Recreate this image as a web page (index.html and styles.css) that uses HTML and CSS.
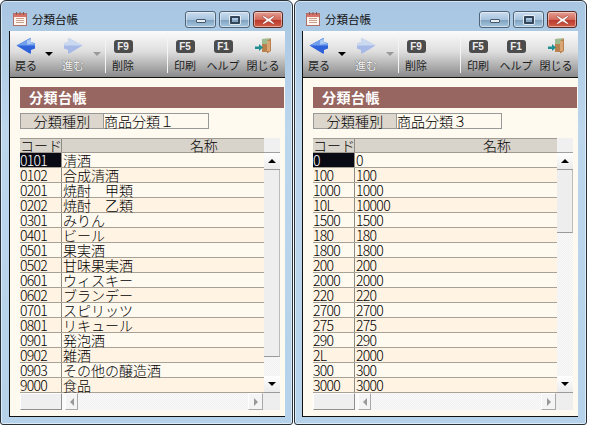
FILE: index.html
```html
<!DOCTYPE html>
<html lang="ja">
<head>
<meta charset="utf-8">
<title>分類台帳</title>
<link rel="stylesheet" href="styles.css">
</head>
<body>
<div class="desk">
  <section class="win win-a">
    <div class="cap">
      <svg class="app" viewBox="0 0 16 16"><rect x="1.5" y="2.5" width="13" height="12" fill="#fff6ee" stroke="#b0706a"/><rect x="2" y="3" width="12" height="3" fill="#d9736a"/><path d="M4 7.500h8M4 9.500h8M4 11.500h8" stroke="#c9a090"/><path d="M4.500 1v3M8 1v3M11.500 1v3" stroke="#8a5a50"/></svg>
      <span class="cap-t">分類台帳</span>
      <div class="ctl"><span class="btn"><i class="g-min"></i></span><span class="btn"><i class="g-max"></i></span><span class="btn close"><svg viewBox="0 0 12 9" class="g-x"><path d="M1.500 .5 6 3.200 10.500 .5 11.500 1.500 8 4.500 11.500 7.500 10.500 8.500 6 5.800 1.500 8.500 .5 7.500 4 4.500 .5 1.500Z" fill="#fff" stroke="#8a3a30" stroke-width=".5"/></svg></span></div>
    </div>
    <div class="client">
      <div class="tb">
        <div class="tool t-nav"><svg class="ic" viewBox="0 0 20 16"><path d="M.5 7.500 13.500.5h1.500v3.500l4 1.500v5l-4 1.500v3.500h-1.500Z" fill="#2f62d8"/><path d="M.5 7.500 13.500.5h1.500v3.500l4 1.500v2Z" fill="#6f9fec"/><path d="M11 2.500 15 1v3l3 1.500-7 1Z" fill="#a9c8f4"/></svg><span>戻る</span></div>
        <i class="drop"></i>
        <div class="tool t-nav off"><svg class="ic" viewBox="0 0 20 16"><path d="M19.500 7.500 6.500.5H5v3.500l-4 1.500v5l4 1.500v3.500h1.500Z" fill="#a7b9e6"/><path d="M19.500 7.500 6.500.5H5v3.500l-4 1.500v2Z" fill="#cbd9f0"/></svg><span>進む</span></div>
        <i class="drop off"></i>
        <b class="sep"></b>
        <div class="tool t-f"><kbd>F9</kbd><span>削除</span></div>
        <b class="sep s2"></b>
        <div class="tool t-p"><kbd>F5</kbd><span>印刷</span></div>
        <div class="tool t-h"><kbd>F1</kbd><span>ヘルプ</span></div>
        <div class="tool t-c"><svg class="ic door" viewBox="0 0 18 16"><path d="M8 1l9-.5V13l-4 2.500V14H8Z" fill="#b9814e"/><path d="M8 1l9-.5-4 2.500v3H8Z" fill="#9dbb8f"/><path d="M13 3h3v10h-3Z" fill="#d9a673"/><path d="M1 8.500h4V6l4 3.500L5 13v-2H1Z" fill="#1f8f92"/></svg><span>閉じる</span></div>
      </div>
      <div class="body">
        <h1 class="band">分類台帳</h1>
        <div class="kind"><span class="k-l">分類種別</span><span class="k-v">商品分類１</span></div>
        <div class="grid">
          <div class="hd"><span class="c1">コード</span><span class="c2">名称</span></div>
          <div class="r sel"><span class="c1">0101</span><span class="c2">清酒</span></div>
          <div class="r"><span class="c1">0102</span><span class="c2">合成清酒</span></div>
          <div class="r"><span class="c1">0201</span><span class="c2">焼酎　甲類</span></div>
          <div class="r"><span class="c1">0202</span><span class="c2">焼酎　乙類</span></div>
          <div class="r"><span class="c1">0301</span><span class="c2">みりん</span></div>
          <div class="r"><span class="c1">0401</span><span class="c2">ビール</span></div>
          <div class="r"><span class="c1">0501</span><span class="c2">果実酒</span></div>
          <div class="r"><span class="c1">0502</span><span class="c2">甘味果実酒</span></div>
          <div class="r"><span class="c1">0601</span><span class="c2">ウィスキー</span></div>
          <div class="r"><span class="c1">0602</span><span class="c2">ブランデー</span></div>
          <div class="r"><span class="c1">0701</span><span class="c2">スピリッツ</span></div>
          <div class="r"><span class="c1">0801</span><span class="c2">リキュール</span></div>
          <div class="r"><span class="c1">0901</span><span class="c2">発泡酒</span></div>
          <div class="r"><span class="c1">0902</span><span class="c2">雑酒</span></div>
          <div class="r"><span class="c1">0903</span><span class="c2">その他の醸造酒</span></div>
          <div class="r"><span class="c1">9000</span><span class="c2">食品</span></div>
          <div class="vs"><i class="corner"></i><i class="arr"><em class="up"></em></i><i class="thumb th-a"></i><i class="fill"></i><i class="arr"><em class="dn"></em></i></div>
          <div class="hs"><i class="hthumb"></i><i class="hgap"></i><i class="harr"><em class="lf"></em></i><i class="htrack"></i><i class="harr rb"><em class="rt"></em></i><i class="hend"></i></div>
        </div>
      </div>
    </div>
  </section>
  <section class="win win-b">
    <div class="cap">
      <svg class="app" viewBox="0 0 16 16"><rect x="1.500" y="2.500" width="13" height="12" fill="#fff6ee" stroke="#b0706a"/><rect x="2" y="3" width="12" height="3" fill="#d9736a"/><path d="M4 7.500h8M4 9.500h8M4 11.500h8" stroke="#c9a090"/><path d="M4.500 1v3M8 1v3M11.500 1v3" stroke="#8a5a50"/></svg>
      <span class="cap-t">分類台帳</span>
      <div class="ctl"><span class="btn"><i class="g-min"></i></span><span class="btn"><i class="g-max"></i></span><span class="btn close"><svg viewBox="0 0 12 9" class="g-x"><path d="M1.500 .5 6 3.200 10.500 .5 11.500 1.500 8 4.500 11.500 7.500 10.500 8.500 6 5.800 1.500 8.500 .5 7.500 4 4.500 .5 1.500Z" fill="#fff" stroke="#8a3a30" stroke-width=".5"/></svg></span></div>
    </div>
    <div class="client">
      <div class="tb">
        <div class="tool t-nav"><svg class="ic" viewBox="0 0 20 16"><path d="M.5 7.500 13.500.5h1.500v3.500l4 1.500v5l-4 1.500v3.500h-1.500Z" fill="#2f62d8"/><path d="M.5 7.500 13.500.5h1.500v3.500l4 1.500v2Z" fill="#6f9fec"/><path d="M11 2.500 15 1v3l3 1.500-7 1Z" fill="#a9c8f4"/></svg><span>戻る</span></div>
        <i class="drop"></i>
        <div class="tool t-nav off"><svg class="ic" viewBox="0 0 20 16"><path d="M19.500 7.500 6.500.5H5v3.500l-4 1.500v5l4 1.500v3.500h1.500Z" fill="#a7b9e6"/><path d="M19.500 7.500 6.500.5H5v3.500l-4 1.500v2Z" fill="#cbd9f0"/></svg><span>進む</span></div>
        <i class="drop off"></i>
        <b class="sep"></b>
        <div class="tool t-f"><kbd>F9</kbd><span>削除</span></div>
        <b class="sep s2"></b>
        <div class="tool t-p"><kbd>F5</kbd><span>印刷</span></div>
        <div class="tool t-h"><kbd>F1</kbd><span>ヘルプ</span></div>
        <div class="tool t-c"><svg class="ic door" viewBox="0 0 18 16"><path d="M8 1l9-.5V13l-4 2.500V14H8Z" fill="#b9814e"/><path d="M8 1l9-.5-4 2.500v3H8Z" fill="#9dbb8f"/><path d="M13 3h3v10h-3Z" fill="#d9a673"/><path d="M1 8.500h4V6l4 3.500L5 13v-2H1Z" fill="#1f8f92"/></svg><span>閉じる</span></div>
      </div>
      <div class="body">
        <h1 class="band">分類台帳</h1>
        <div class="kind"><span class="k-l">分類種別</span><span class="k-v">商品分類３</span></div>
        <div class="grid">
          <div class="hd"><span class="c1">コード</span><span class="c2">名称</span></div>
          <div class="r sel"><span class="c1">0</span><span class="c2 num">0</span></div>
          <div class="r"><span class="c1">100</span><span class="c2 num">100</span></div>
          <div class="r"><span class="c1">1000</span><span class="c2 num">1000</span></div>
          <div class="r"><span class="c1">10L</span><span class="c2 num">10000</span></div>
          <div class="r"><span class="c1">1500</span><span class="c2 num">1500</span></div>
          <div class="r"><span class="c1">180</span><span class="c2 num">180</span></div>
          <div class="r"><span class="c1">1800</span><span class="c2 num">1800</span></div>
          <div class="r"><span class="c1">200</span><span class="c2 num">200</span></div>
          <div class="r"><span class="c1">2000</span><span class="c2 num">2000</span></div>
          <div class="r"><span class="c1">220</span><span class="c2 num">220</span></div>
          <div class="r"><span class="c1">2700</span><span class="c2 num">2700</span></div>
          <div class="r"><span class="c1">275</span><span class="c2 num">275</span></div>
          <div class="r"><span class="c1">290</span><span class="c2 num">290</span></div>
          <div class="r"><span class="c1">2L</span><span class="c2 num">2000</span></div>
          <div class="r"><span class="c1">300</span><span class="c2 num">300</span></div>
          <div class="r"><span class="c1">3000</span><span class="c2 num">3000</span></div>
          <div class="vs"><i class="corner"></i><i class="arr"><em class="up"></em></i><i class="thumb th-b"></i><i class="fill"></i><i class="arr"><em class="dn"></em></i></div>
          <div class="hs"><i class="hthumb"></i><i class="hgap"></i><i class="harr"><em class="lf"></em></i><i class="htrack"></i><i class="harr rb"><em class="rt"></em></i><i class="hend"></i></div>
        </div>
      </div>
    </div>
  </section>
</div>
</body>
</html>
```
FILE: styles.css
```css
* { box-sizing: border-box; }
html, body { margin: 0; background: #fff; }
body { width: 589px; height: 426px; overflow: hidden; font-family: "Noto Sans CJK JP", "Liberation Sans", sans-serif; color: #000; }
.desk { display: flex; gap: 1px; height: 425px; }
.win { width: 293px; height: 425px; border: 1px solid #27313a; border-radius: 6px 6px 3px 3px; background: linear-gradient(#a8c6e2, #bcd6ec 30%, #b5d2ea); padding: 0 7px 7px 8px; display: flex; flex-direction: column; box-shadow: inset 0 0 0 1px rgba(255,255,255,.55); }
.win-b { padding-left: 7px; padding-right: 8px; }
.cap { height: 30px; flex: none; display: flex; align-items: center; position: relative; }
.app { width: 16px; height: 16px; margin: 5px 0 0 3px; }
.cap-t { font-size: 11.500px; margin: 5px 0 0 4px; color: #111; }
.ctl { margin-left: auto; align-self: flex-start; display: flex; gap: 3px; margin-right: 2px; padding-top: 10px; }
.win-b .ctl { margin-right: 1px; }
.btn { width: 31px; height: 17px; border: 1px solid #4f6478; border-radius: 3px; background: linear-gradient(#c9dcee, #a9c5de 50%, #7d9fbd 52%, #a8c8e0); display: flex; align-items: center; justify-content: center; box-shadow: inset 0 0 0 1px rgba(255,255,255,.45); }
.close { width: 30px; border-color: #5a2a25; background: linear-gradient(#e5a092, #d2695a 50%, #b8372a 52%, #d2604a); }
.g-min { width: 10px; height: 4px; margin-top: 3px; background: #e8f0f7; border: 1px solid #46586a; border-radius: 1px; }
.g-max { width: 10px; height: 8px; background: transparent; border: 2px solid #34465a; box-shadow: 0 0 0 1px rgba(255,255,255,.7); border-radius: 1px; }
.g-x { width: 13px; height: 10px; }
.client { flex: 1; display: flex; flex-direction: column; background: #fffaf0; border-left: 1px solid #111; border-bottom: 1px solid #111; min-height: 0; }
.tb { height: 47px; flex: none; display: flex; align-items: stretch; background: linear-gradient(#fbfbfb, #dedede 45%, #8a8a8a); border-bottom: 1px solid #111; font-size: 11px; color: #1c1c1c; padding-left: 4px; }
.tool { display: flex; flex-direction: column; align-items: center; padding-top: 7px; }
.tool span { margin-top: 3px; line-height: 17px; white-space: nowrap; }
.ic { width: 20px; height: 16px; flex: none; }
.t-nav { width: 24px; }
.t-nav.off span { color: #f4f4f4; text-shadow: 0 0 1px #666, 0 0 1px #666; }
.drop { width: 8px; height: 4px; flex: none; align-self: flex-start; margin: 21px 8px 0 7px; background: #000; clip-path: polygon(0 0, 100% 0, 50% 100%); }
.drop.off { background: #999; margin: 21px 4px 0 8px; }
.sep { width: 1px; background: #f4f4f4; margin: 4px 0; }
.sep.s2 { margin-left: 30px; }
kbd { display: block; width: 19px; height: 13px; margin: 2px 0 1px; background: #4c4c4c; border-radius: 3px; color: #eee; font: bold 10px/13px "Liberation Sans", sans-serif; text-align: center; }
.t-f { width: 28px; margin-left: 3px; }
.t-p { width: 26px; margin-left: 4px; }
.t-h { width: 34px; margin-left: 8px; }
.t-c { width: 34px; margin-left: 6px; }
.door { width: 18px; }
.body { flex: 1; padding: 9px 1px 0 10px; min-height: 0; }
.band { margin: 0; height: 21px; background: #986660; color: #fff; font-size: 14px; letter-spacing: .5px; font-weight: bold; line-height: 20px; padding-left: 9px; }
.kind { display: flex; margin-top: 5px; height: 16px; font-size: 14px; line-height: 14px; width: 189px; font-weight: 300; }
.k-l { width: 84px; background: #dcd6cc; border: 1px solid #999; text-align: center; letter-spacing: .2px; }
.k-v { flex: 1; border: 1px solid #999; border-left: 0; }
.grid { display: grid; grid-template-columns: 42px 202px 16px; grid-auto-rows: 15px; width: 260px; margin-top: 9px; font-size: 14px; font-weight: 300; }
.hd, .r { grid-column: 1 / 3; display: flex; }
.hd { height: 15px; background: #d9d4cb; border-top: 1px solid #a09a92; border-bottom: 1px solid #a09a92; line-height: 13px; }
.c1 { width: 42px; flex: none; border-right: 1px solid #8f8a82; white-space: nowrap; letter-spacing: -.7px; }
.c2 { flex: 1; min-width: 0; padding-left: 1px; white-space: nowrap; }
.c2.num { letter-spacing: -.7px; }
.hd .c1 { letter-spacing: 0; }
.hd .c2 { padding-left: 128px; letter-spacing: -.3px; }
.r { height: 15px; line-height: 14px; border-bottom: 1px solid #a8a296; }
.r:nth-child(even) { background: #fffaf0; }
.r:nth-child(odd) { background: #fff3e3; }
.r.sel .c1 { background: #0a0a14; color: #fff; }
.vs { grid-column: 3; grid-row: 1 / 18; display: flex; flex-direction: column; background: #f2f2f2; height: 255px; }
.vs i { display: block; flex: none; }
.corner { height: 15px; background: #f0f0f0; border-bottom: 1px solid #a0a0a0; }
.arr { height: 17px; background: linear-gradient(#fff, #ebebeb); border-bottom: 1px solid #9a9a9a; display: flex !important; align-items: center; justify-content: center; }
.thumb { background: #eeeeee; border-bottom: 1px solid #9a9a9a; border-right: 1px solid #bbb; }
.th-a { height: 187px; }
.th-b { height: 63px; }
.vs .fill { flex: 1; background: repeating-conic-gradient(#f0f0f0 0 25%, #fafafa 0 50%) 0 0/2px 2px; }
em { display: block; width: 0; height: 0; border: 4px solid transparent; }
.up { border-bottom-color: #000; border-top: 0; }
.dn { border-top-color: #000; border-bottom: 0; }
.lf { border-right-color: #999; border-left: 0; }
.rt { border-left-color: #999; border-right: 0; }
.hs { grid-column: 1 / 4; height: 17px; display: flex; background: #f0f0f0; }
.hs i { display: block; flex: none; }
.hthumb { width: 42px; background: #efefef; border: 1px solid #fff; border-right-color: #8f8f8f; border-bottom-color: #8f8f8f; }
.hs .hgap { width: 3px; background: #fafafa; }
.harr { width: 13px; height: 17px; background: #f4f4f4; border: 1px solid #fff; border-right-color: #a8a8a8; border-bottom-color: #a8a8a8; display: flex !important; align-items: center; justify-content: center; }
.harr.rb { width: 15px; }
.hs .htrack { flex: 1; background: repeating-conic-gradient(#f0f0f0 0 25%, #fafafa 0 50%) 0 0/2px 2px; }
.hs .hend { width: 17px; background: #eee; }
```
